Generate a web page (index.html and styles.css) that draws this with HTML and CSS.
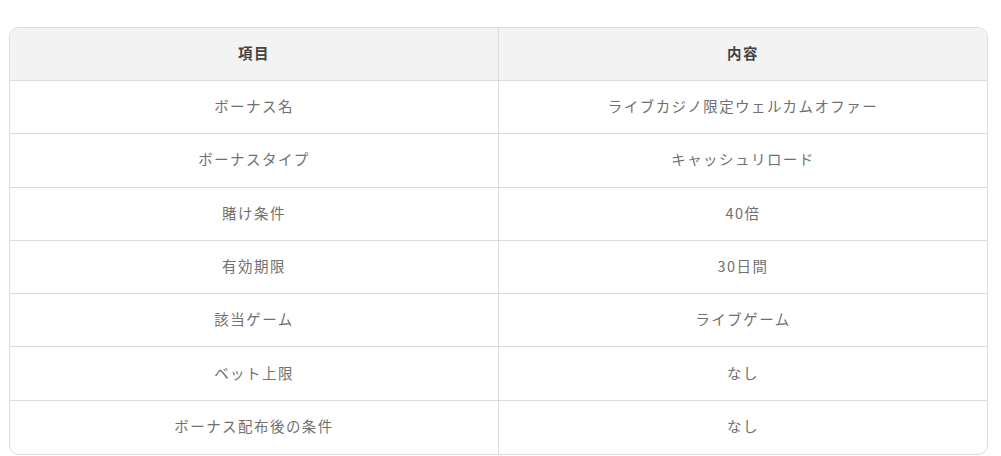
FILE: index.html
```html
<!DOCTYPE html>
<html lang="ja">
<head>
<meta charset="utf-8">
<link rel="stylesheet" href="styles.css">
</head>
<body>
<div class="wrap">
<table class="bonus">
<thead>
<tr><th>項目</th><th>内容</th></tr>
</thead>
<tbody>
<tr><td>ボーナス名</td><td>ライブカジノ限定ウェルカムオファー</td></tr>
<tr><td>ボーナスタイプ</td><td>キャッシュリロード</td></tr>
<tr><td>賭け条件</td><td>40倍</td></tr>
<tr><td>有効期限</td><td>30日間</td></tr>
<tr><td>該当ゲーム</td><td>ライブゲーム</td></tr>
<tr><td>ベット上限</td><td>なし</td></tr>
<tr><td>ボーナス配布後の条件</td><td>なし</td></tr>
</tbody>
</table>
</div>
</body>
</html>
```
FILE: styles.css
```css
html, body {
  margin: 0;
  padding: 0;
  background: #fff;
}
body {
  font-family: "Noto Sans CJK JP", "Noto Sans", sans-serif;
}
.wrap {
  margin: 27px 0 0 9px;
  width: 979px;
  border: 1px solid #dcdcdc;
  border-radius: 10px;
  overflow: hidden;
  box-sizing: border-box;
}
.bonus {
  width: 100%;
  border-collapse: collapse;
  table-layout: fixed;
}
.bonus th, .bonus td {
  height: 53.3px;
  box-sizing: border-box;
  padding: 0 10px 3px;
  text-align: center;
  vertical-align: middle;
  font-size: 14.5px;
  letter-spacing: 1.45px;
  border-bottom: 1px solid #dcdcdc;
}
.bonus th {
  height: 52.5px;
}
.bonus th + th, .bonus td + td {
  border-left: 1px solid #dcdcdc;
}
.bonus tbody tr:last-child td {
  border-bottom: none;
}
.bonus th {
  background: #f3f3f3;
  color: #444;
  font-weight: bold;
}
.bonus td {
  color: #707070;
  font-weight: normal;
}
```
